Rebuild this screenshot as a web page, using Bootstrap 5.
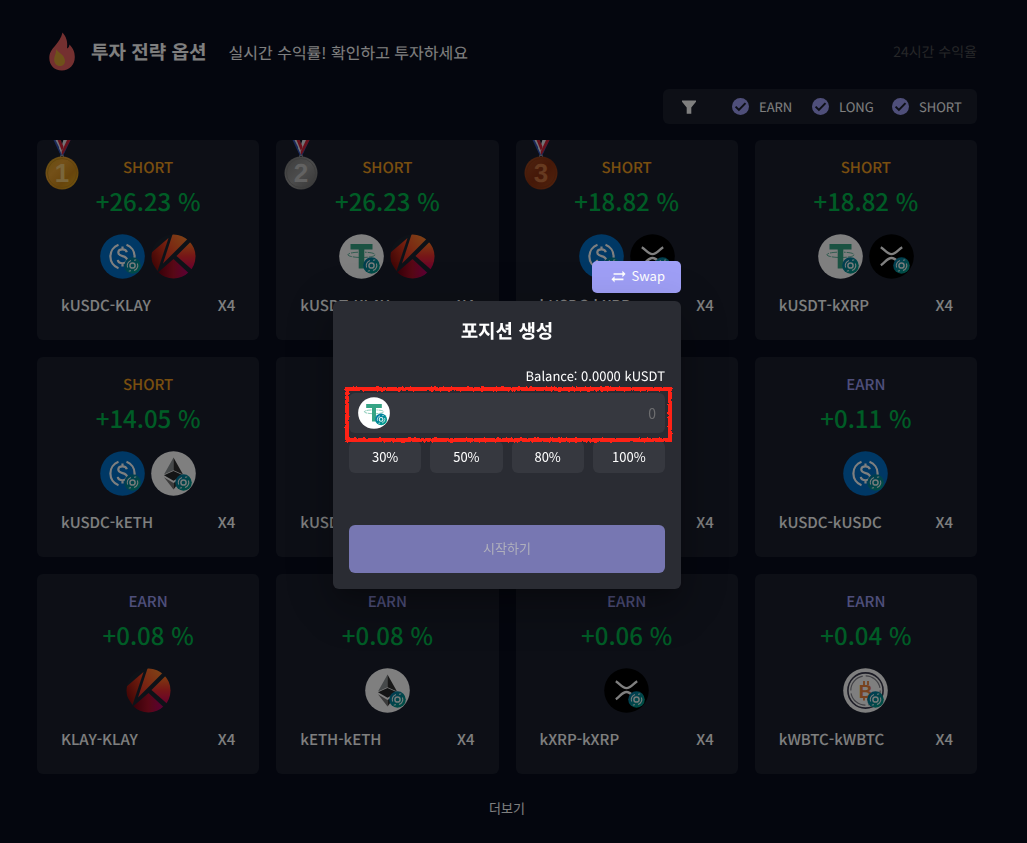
<!DOCTYPE html>
<html lang="ko">
<head>
<meta charset="utf-8">
<meta name="viewport" content="width=device-width, initial-scale=1">
<title>투자 전략 옵션</title>
<link href="https://cdn.jsdelivr.net/npm/bootstrap@5.3.0/dist/css/bootstrap.min.css" rel="stylesheet">
<style>
  :root { --gutter: 13px; --panel: #1a1f2d; --lilac: #9e9ef4; }
  body { background: #090d1d; color: #fff; font-family: "Noto Sans CJK JP", "Noto Sans CJK KR", sans-serif; font-size: 13px; line-height: 20px; text-rendering: geometricPrecision; }
  .page-wrap { padding-right: var(--gutter); }
  .page { max-width: 940px; padding: 28px 0 24px; }
  .flame { margin-right: 12px; }
  .headline { font-size: 19px; line-height: 28px; font-weight: 700; margin: 0; }
  .tagline { font-size: 16px; line-height: 24px; margin-left: 22px; }
  .period { font-size: 14px; color: #4c4c50; }
  .filters { background: var(--panel); border-radius: 6px; height: 35px; padding-left: 18px; padding-right: 5px; margin-top: 5px; }
  .filters .form-check { width: 80px; min-height: 0; color: #fff; gap: 10px; }
  .filters .form-check-input { width: 17px; height: 17px; border: 0; border-radius: 50%; background-color: var(--lilac);
    background-size: 100% 100%;
    background-image: url("data:image/svg+xml,%3Csvg xmlns='http://www.w3.org/2000/svg' viewBox='0 0 17 17'%3E%3Cpath d='M3.6 8.6l3.3 3.3 6.6-6.8' fill='none' stroke='%231a1f2d' stroke-width='2'/%3E%3C/svg%3E"); }
  .funnel { margin-right: 35px; }
  .strategies { display: grid; grid-template-columns: repeat(4, minmax(0, 1fr)); gap: 17px; margin-top: 16px; }
  .strategy { background: var(--panel); border-radius: 6px; min-height: 200px; padding: 16px 24px 0; text-align: center; }
  .kind { font-size: 15px; line-height: 24px; font-weight: 500; color: #f29e1f; }
  .kind.earn { color: var(--lilac); }
  .rate { font-size: 24px; line-height: 36px; font-weight: 500; color: #00b84c; margin-top: 3px; }
  .coins { margin-top: 15px; gap: 6px; }
  .coin { width: 45px; height: 45px; }
  .pair { font-size: 15px; line-height: 24px; font-weight: 500; margin-top: 15px; }
  .medal { position: absolute; top: 0; left: 8px; width: 34px; height: 50px; }
  .more { margin-top: 24px; color: #fff; font-size: 13px; line-height: 20px; }
  .modal { padding-right: var(--gutter); }
  .modal-dialog { max-width: 348px; padding-top: 7px; }
  .shade { position: fixed; inset: 0; background: rgba(0,0,0,.5); z-index: 1050; }
  .swap { background: #9f9ff6; color: #fff; border: 0; border-radius: 5px; height: 32px; padding: 0 16px 2px 18px; font-size: 13px; line-height: 20px; margin-bottom: 8px; gap: 5px; }
  .panel-box { background: #2a2c33; color: #fff; border: 0; border-radius: 6px; padding: 16px;
    box-shadow: 0 11px 15px -7px rgba(0,0,0,.2), 0 24px 38px 3px rgba(0,0,0,.14), 0 9px 46px 8px rgba(0,0,0,.12); }
  .panel-box h2 { font-size: 19px; line-height: 28px; font-weight: 700; margin: 0; }
  .balance { margin-top: 21px; line-height: 20px; }
  .amount { margin-top: 7px; height: 40px; background: #36383f; border-radius: 6px; padding: 0 9px; }
  .amount .coin { width: 32px; height: 32px; }
  .amount input { color: #fff; font-size: 14px; line-height: 20px; }
  .amount input::placeholder { color: #6e6e70; opacity: 1; }
  .frame { position: absolute; inset: -7px -8px -10px -5px; overflow: visible; pointer-events: none; }
  .portions { margin-top: 8px; gap: 9px; }
  .portions .btn { background: #36383f; color: #fff; border: 0; border-radius: 6px; font-size: 13px; line-height: 20px; height: 32px; padding: 0; }
  .start, .start:disabled { margin-top: 52px; height: 48px; background: #7777b2; color: #b0b0bc; border: 0; border-radius: 6px; font-size: 13px; line-height: 20px; padding: 0 0 2px; opacity: 1; }
</style>
</head>
<body>
<svg width="0" height="0" class="position-absolute" aria-hidden="true">
  <defs>
    <linearGradient id="gBadge" x1="0" y1="0" x2="1" y2="1"><stop offset="0" stop-color="#0072a8"/><stop offset="1" stop-color="#00a385"/></linearGradient>
    <linearGradient id="gK1" x1="1" y1="0" x2="0" y2="1"><stop offset="0" stop-color="#ff4a22"/><stop offset="1" stop-color="#6e0008"/></linearGradient>
    <linearGradient id="gK2" x1="1" y1="0" x2="0" y2="1"><stop offset="0" stop-color="#ff9030"/><stop offset=".5" stop-color="#f85a26"/><stop offset="1" stop-color="#e02424"/></linearGradient>
    <linearGradient id="gK3" x1=".5" y1="0" x2=".5" y2="1"><stop offset="0" stop-color="#ff7a20"/><stop offset=".5" stop-color="#ee2e2e"/><stop offset="1" stop-color="#d0005c"/></linearGradient>
    <linearGradient id="gK4" x1="0" y1="0" x2="1" y2="0"><stop offset="0" stop-color="#6e0010"/><stop offset=".5" stop-color="#b0102a"/><stop offset="1" stop-color="#b8006c"/></linearGradient>
    <linearGradient id="gGold" x1="0" y1="0" x2="1" y2="1"><stop offset="0" stop-color="#c89a1a"/><stop offset=".35" stop-color="#e8a030"/><stop offset=".65" stop-color="#d08a18"/><stop offset="1" stop-color="#e8b01c"/></linearGradient>
    <linearGradient id="gSilver" x1="0" y1="0" x2="1" y2="1"><stop offset="0" stop-color="#767676"/><stop offset=".5" stop-color="#989898"/><stop offset="1" stop-color="#6a6a6a"/></linearGradient>
    <linearGradient id="gBronze" x1="0" y1="0" x2="1" y2="1"><stop offset="0" stop-color="#a04a22"/><stop offset=".5" stop-color="#8a3010"/><stop offset="1" stop-color="#a4481c"/></linearGradient>
    <clipPath id="disc"><circle cx="22.500" cy="22.500" r="22"/></clipPath>
    <filter id="rough" filterUnits="userSpaceOnUse" x="-4" y="-4" width="337" height="65"><feTurbulence type="fractalNoise" baseFrequency=".45" numOctaves="2" seed="4"/><feDisplacementMap in="SourceGraphic" scale="3" xChannelSelector="R" yChannelSelector="G"/></filter>
  </defs>
  <symbol id="kbadge" viewBox="0 0 45 45">
    <circle cx="32.500" cy="31.500" r="8.300" fill="url(#gBadge)"/>
    <g fill="none" stroke="#e8f4f4"><circle cx="32.500" cy="31.500" r="2.600" stroke-width="1.500"/>
    <path d="M27.600 33.500a5.300 5.300 0 0 1 3.400-7M37.400 29.500a5.300 5.300 0 0 1-3.400 7" stroke-width="1.100"/><path d="M34 26.300l2.200-.4M31 36.700l-2.200.4" stroke-width="1"/></g>
  </symbol>
  <symbol id="usdc" viewBox="0 0 45 45">
    <circle cx="22.500" cy="22.500" r="22.300" fill="#0071ca"/>
    <path d="M18.500 10.800a12.500 12.500 0 0 0 0 23.400M26.500 10.800a12.500 12.500 0 0 1 0 23.400" fill="none" stroke="#fff" stroke-width="2.200"/>
    <path d="M26.800 18.300c-.4-2-2-2.900-4.300-2.900s-4.200 1-4.200 3.200c0 4.700 8.700 2.400 8.700 7.200 0 2.300-1.900 3.500-4.500 3.500s-4.400-1.200-4.700-3.400M22.500 12.400v3.200M22.500 29v3.500" fill="none" stroke="#fff" stroke-width="2.200"/>
  </symbol>
  <symbol id="usdt" viewBox="0 0 45 45">
    <circle cx="22.500" cy="22.500" r="22.300" fill="#fff"/>
    <path d="M11.500 10h22v5.500h-8.200v19h-5.600v-19h-8.200z" fill="#35a485"/>
    <path d="M19 18.200c-6 .3-10 1.200-10 2.600s6 2.700 13.500 2.700 13.500-1.200 13.500-2.700-4-2.300-10-2.600" fill="none" stroke="#35a485" stroke-width=".8" stroke-dasharray="7 1"/>
  </symbol>
  <symbol id="klay" viewBox="0 0 45 45">
    <circle cx="22.500" cy="22.500" r="22" fill="#1b2531"/>
    <g clip-path="url(#disc)"><path d="M17.500 4L0 19v8l6.500 10z" fill="url(#gK1)"/><path d="M22-1h14l1 5.500-25 25z" fill="url(#gK2)"/><path d="M39.500 8L46 14v18l-4.500 4-16-14z" fill="url(#gK3)"/><path d="M22.500 25l15 14-9 7H16l-9-7.500z" fill="url(#gK4)"/></g>
  </symbol>
  <symbol id="xrp" viewBox="0 0 45 45">
    <circle cx="22.500" cy="22.500" r="22.300" fill="#000"/>
    <path d="M11.800 13.200c4 2.300 6.200 7 10.700 7s6.700-4.700 10.700-7M11.800 31.200c4-2.300 6.200-7.200 10.700-7.200s6.700 4.900 10.700 7.200" fill="none" stroke="#fff" stroke-width="2.300"/>
  </symbol>
  <symbol id="eth" viewBox="0 0 45 45">
    <circle cx="22.500" cy="22.500" r="22.300" fill="#fff"/>
    <path d="M22.500 6.500v12.800L13 23.500z" fill="#8c9294"/><path d="M22.500 6.500v12.800l9.500 4.200z" fill="#303030"/>
    <path d="M13 24.300l9.500-4.300 9.500 4.300-9.500 5.500z" fill="#26282a"/><path d="M13 26.200l9.500 5.700v6.600z" fill="#777"/><path d="M32 26.200l-9.500 5.700v6.600z" fill="#333"/>
  </symbol>
  <symbol id="wbtc" viewBox="0 0 45 45">
    <circle cx="22.500" cy="22.500" r="22.300" fill="#fff"/>
    <circle cx="22.500" cy="22.500" r="17.600" fill="none" stroke="#38384c" stroke-width="1.600"/>
    <circle cx="22.500" cy="22.500" r="14.700" fill="none" stroke="#85858e" stroke-width="1.200" stroke-dasharray="20 3"/>
    <path d="M21 13v4M25 13v4M21 28.500v4M25 28.500v4" stroke="#f0853c" stroke-width="1.800"/>
  </symbol>
  <symbol id="ribbon" viewBox="0 0 34 50">
    <path d="M8.500 0h8l4 9-2.500 7h-2z" fill="#3452b4"/><path d="M25.500 0h-8l-4 9 2.500 7h2z" fill="#3452b4"/>
    <path d="M10.500 0h6l3.500 8-2.500 6z" fill="#e8e8ee"/><path d="M23.500 0h-6L14 8l2.500 6z" fill="#e8e8ee"/>
    <path d="M12.500 0H16l2.500 7-1.500 4z" fill="#d02238"/><path d="M25.500 0H22l-5.500 12 .8 3.500z" fill="#d02238"/>
    <path d="M15.800 0h2.600l-1.300 4z" fill="#0b0e1c"/>
    <circle cx="17" cy="16.500" r="1.500" fill="none" stroke="#aaa"/>
  </symbol>
</svg>

<div class="page-wrap">
<main class="page mx-auto">
  <header class="d-flex align-items-center mb-2">
    <svg class="flame ms-2" width="34" height="48" viewBox="0 0 34 48" aria-hidden="true">
      <path d="M17.500 4.500c3.700 4.500 5.400 8.500 4.500 16 2-1 2.300-2.200 2.400-4 4 4 5.400 7.500 5.400 12.500 0 8-5.500 13.500-13 13.500S4.300 37 4.300 30c0-5.500 2.600-8.500 6-12.500 3.300-4 6-7.500 7.200-13z" fill="#e86060"/>
      <path d="M11 21c2.500 4 9 6 9 12 0 3-2.200 5-5 5-3.500 0-5.800-2.600-5.800-6.500 0-3.500 2.200-6 1.800-10.500z" fill="#dfa535"/>
    </svg>
    <h1 class="headline">투자 전략 옵션</h1>
    <span class="tagline">실시간 수익률! 확인하고 투자하세요</span>
    <span class="period ms-auto">24시간 수익율</span>
  </header>

  <div class="d-flex justify-content-end">
    <form class="filters d-flex align-items-center">
      <svg class="funnel" width="16" height="16" viewBox="0 0 16 16" aria-hidden="true"><path d="M1 1.500h14v1.300L10.300 8.500v6.300H5.700V8.500L1 2.800z" fill="#fff"/></svg>
      <div class="form-check d-flex align-items-center p-0 m-0"><input class="form-check-input m-0" type="checkbox" id="fEarn" checked><label for="fEarn">EARN</label></div>
      <div class="form-check d-flex align-items-center p-0 m-0"><input class="form-check-input m-0" type="checkbox" id="fLong" checked><label for="fLong">LONG</label></div>
      <div class="form-check d-flex align-items-center p-0 m-0"><input class="form-check-input m-0" type="checkbox" id="fShort" checked><label for="fShort">SHORT</label></div>
    </form>
  </div>

  <section class="strategies">
    <article class="strategy position-relative">
      <svg class="medal" viewBox="0 0 34 50"><use href="#ribbon"/><circle cx="17" cy="33" r="16.500" fill="url(#gGold)"/><circle cx="17" cy="33" r="14.500" fill="none" stroke="#c48a1c"/><text x="17" y="42" text-anchor="middle" font-family="Liberation Sans" font-weight="700" font-size="26" fill="#f4cc78">1</text></svg>
      <div class="kind">SHORT</div>
      <div class="rate">+26.23 %</div>
      <div class="coins d-flex justify-content-center"><svg class="coin"><use href="#usdc"/><use href="#kbadge"/></svg><svg class="coin"><use href="#klay"/></svg></div>
      <div class="pair d-flex justify-content-between"><span>kUSDC-KLAY</span><span>X4</span></div>
    </article>
    <article class="strategy position-relative">
      <svg class="medal" viewBox="0 0 34 50"><use href="#ribbon"/><circle cx="17" cy="33" r="16.500" fill="url(#gSilver)"/><circle cx="17" cy="33" r="14.500" fill="none" stroke="#7c7c7c"/><text x="17" y="42" text-anchor="middle" font-family="Liberation Sans" font-weight="700" font-size="26" fill="#c4c4c4">2</text></svg>
      <div class="kind">SHORT</div>
      <div class="rate">+26.23 %</div>
      <div class="coins d-flex justify-content-center"><svg class="coin"><use href="#usdt"/><use href="#kbadge"/></svg><svg class="coin"><use href="#klay"/></svg></div>
      <div class="pair d-flex justify-content-between"><span>kUSDT-KLAY</span><span>X4</span></div>
    </article>
    <article class="strategy position-relative">
      <svg class="medal" viewBox="0 0 34 50"><use href="#ribbon"/><circle cx="17" cy="33" r="16.500" fill="url(#gBronze)"/><circle cx="17" cy="33" r="14.500" fill="none" stroke="#8c3814"/><text x="17" y="42" text-anchor="middle" font-family="Liberation Sans" font-weight="700" font-size="26" fill="#cc7440">3</text></svg>
      <div class="kind">SHORT</div>
      <div class="rate">+18.82 %</div>
      <div class="coins d-flex justify-content-center"><svg class="coin"><use href="#usdc"/><use href="#kbadge"/></svg><svg class="coin"><use href="#xrp"/><use href="#kbadge"/></svg></div>
      <div class="pair d-flex justify-content-between"><span>kUSDC-kXRP</span><span>X4</span></div>
    </article>
    <article class="strategy">
      <div class="kind">SHORT</div>
      <div class="rate">+18.82 %</div>
      <div class="coins d-flex justify-content-center"><svg class="coin"><use href="#usdt"/><use href="#kbadge"/></svg><svg class="coin"><use href="#xrp"/><use href="#kbadge"/></svg></div>
      <div class="pair d-flex justify-content-between"><span>kUSDT-kXRP</span><span>X4</span></div>
    </article>

    <article class="strategy">
      <div class="kind">SHORT</div>
      <div class="rate">+14.05 %</div>
      <div class="coins d-flex justify-content-center"><svg class="coin"><use href="#usdc"/><use href="#kbadge"/></svg><svg class="coin"><use href="#eth"/><use href="#kbadge"/></svg></div>
      <div class="pair d-flex justify-content-between"><span>kUSDC-kETH</span><span>X4</span></div>
    </article>
    <article class="strategy">
      <div class="kind">SHORT</div>
      <div class="rate">+14.05 %</div>
      <div class="coins d-flex justify-content-center"><svg class="coin"><use href="#usdt"/><use href="#kbadge"/></svg><svg class="coin"><use href="#eth"/><use href="#kbadge"/></svg></div>
      <div class="pair d-flex justify-content-between"><span>kUSDT-kETH</span><span>X4</span></div>
    </article>
    <article class="strategy">
      <div class="kind earn">EARN</div>
      <div class="rate">+0.11 %</div>
      <div class="coins d-flex justify-content-center"><svg class="coin"><use href="#usdt"/><use href="#kbadge"/></svg></div>
      <div class="pair d-flex justify-content-between"><span>kUSDT-kUSDT</span><span>X4</span></div>
    </article>
    <article class="strategy">
      <div class="kind earn">EARN</div>
      <div class="rate">+0.11 %</div>
      <div class="coins d-flex justify-content-center"><svg class="coin"><use href="#usdc"/><use href="#kbadge"/></svg></div>
      <div class="pair d-flex justify-content-between"><span>kUSDC-kUSDC</span><span>X4</span></div>
    </article>

    <article class="strategy">
      <div class="kind earn">EARN</div>
      <div class="rate">+0.08 %</div>
      <div class="coins d-flex justify-content-center"><svg class="coin"><use href="#klay"/></svg></div>
      <div class="pair d-flex justify-content-between"><span>KLAY-KLAY</span><span>X4</span></div>
    </article>
    <article class="strategy">
      <div class="kind earn">EARN</div>
      <div class="rate">+0.08 %</div>
      <div class="coins d-flex justify-content-center"><svg class="coin"><use href="#eth"/><use href="#kbadge"/></svg></div>
      <div class="pair d-flex justify-content-between"><span>kETH-kETH</span><span>X4</span></div>
    </article>
    <article class="strategy">
      <div class="kind earn">EARN</div>
      <div class="rate">+0.06 %</div>
      <div class="coins d-flex justify-content-center"><svg class="coin"><use href="#xrp"/><use href="#kbadge"/></svg></div>
      <div class="pair d-flex justify-content-between"><span>kXRP-kXRP</span><span>X4</span></div>
    </article>
    <article class="strategy">
      <div class="kind earn">EARN</div>
      <div class="rate">+0.04 %</div>
      <div class="coins d-flex justify-content-center"><svg class="coin" viewBox="0 0 45 45"><use href="#wbtc"/><text x="22.500" y="29.500" text-anchor="middle" font-family="Liberation Sans" font-weight="700" font-size="19" fill="#f0853c">B</text><use href="#kbadge"/></svg></div>
      <div class="pair d-flex justify-content-between"><span>kWBTC-kWBTC</span><span>X4</span></div>
    </article>
  </section>

  <div class="text-center"><button type="button" class="btn more border-0 p-0">더보기</button></div>
</main>
</div>

<div class="shade"></div>
<div class="modal show d-block" tabindex="-1" role="dialog" aria-labelledby="dlgTitle">
  <div class="modal-dialog modal-dialog-centered flex-column justify-content-center align-items-end my-0 min-vh-100">
    <button type="button" class="btn swap d-flex align-items-center">
      <svg width="17" height="17" viewBox="0 0 24 24" aria-hidden="true"><path d="M22 8.500l-4.500-4.500v3.300H5v2.400h12.500V13zM2 16l4.500 4.500v-3.300H19v-2.400H6.500v-3.300z" fill="#fff"/></svg>
      <span>Swap</span>
    </button>
    <div class="modal-content panel-box">
      <h2 id="dlgTitle" class="text-center">포지션 생성</h2>
      <div class="balance text-end">Balance: 0.0000 kUSDT</div>
      <div class="amount d-flex align-items-center position-relative">
        <svg class="coin flex-shrink-0" viewBox="0 0 45 45"><use href="#usdt"/><use href="#kbadge"/></svg>
        <input type="text" class="form-control border-0 bg-transparent shadow-none p-0 text-end" placeholder="0" aria-label="kUSDT">
        <svg class="frame" width="329" height="57" viewBox="0 0 329 57" preserveAspectRatio="none" aria-hidden="true"><rect x="3" y="3" width="323" height="51" fill="none" stroke="#ff2418" stroke-width="4" filter="url(#rough)"/></svg>
      </div>
      <div class="portions d-flex">
        <button type="button" class="btn flex-fill w-25">30%</button>
        <button type="button" class="btn flex-fill w-25">50%</button>
        <button type="button" class="btn flex-fill w-25">80%</button>
        <button type="button" class="btn flex-fill w-25">100%</button>
      </div>
      <button type="button" class="btn start w-100" disabled>시작하기</button>
    </div>
  </div>
</div>
<script src="https://cdn.jsdelivr.net/npm/bootstrap@5.3.0/dist/js/bootstrap.bundle.min.js"></script>
</body>
</html>
